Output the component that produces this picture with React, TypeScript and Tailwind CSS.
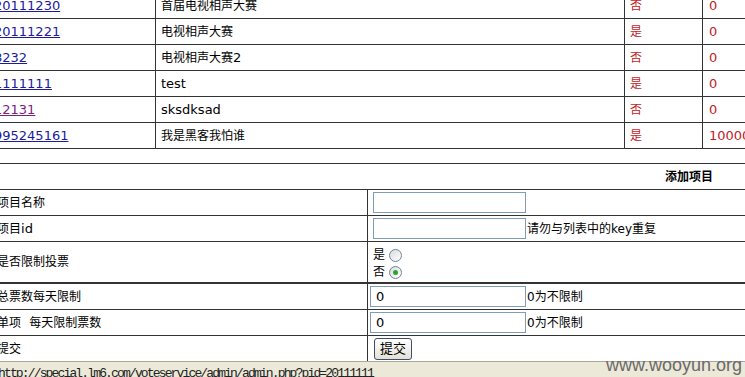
import React from "react";

type Row = { id: string; name: string; limit: string; total: string; visited?: boolean };

const rows: Row[] = [
  { id: "20111230", name: "首届电视相声大赛", limit: "否", total: "0" },
  { id: "20111221", name: "电视相声大赛", limit: "是", total: "0" },
  { id: "8232", name: "电视相声大赛2", limit: "否", total: "0" },
  { id: "1111111", name: "test", limit: "是", total: "0" },
  { id: "12131", name: "sksdksad", limit: "否", total: "0", visited: true },
  { id: "995245161", name: "我是黑客我怕谁", limit: "是", total: "10000" },
];

// CJK runs come out a little narrower than the latin text in the original
const Mixed = ({ text }: { text: string }) => {
  const parts = text.split(/([\u3000-\u303f\u4e00-\u9fff\uff00-\uffef]+)/);
  return (
    <>
      {parts.map((p, i) =>
        /[\u3000-\u303f\u4e00-\u9fff\uff00-\uffef]/.test(p) ? (
          <span key={i} className="text-[12px]">
            {p}
          </span>
        ) : (
          <span key={i}>{p}</span>
        )
      )}
    </>
  );
};

const TextBox = ({ value = "", wide = false }: { value?: string; wide?: boolean }) => (
  <div
    className={`h-[21px] shrink-0 border border-[#7f9db9] bg-white flex items-center text-[13px] text-black ${
      wide ? "w-[156px] pl-[5px]" : "w-[153px] pl-[3px]"
    }`}
  >
    {value}
  </div>
);

const Radio = ({ checked = false }: { checked?: boolean }) => (
  <div className="w-[13px] h-[13px] rounded-full border border-[#6f8398] bg-gradient-to-br from-[#d8dce0] to-white flex items-center justify-center">
    {checked && <div className="w-[5px] h-[5px] rounded-full bg-[#2aa52a]" />}
  </div>
);

const FormRow = ({
  label,
  children,
  className = "h-[26px] border-b",
}: {
  label: string;
  children: React.ReactNode;
  className?: string;
}) => (
  <div className={`flex border-[#333] border-solid ${className}`}>
    <div className="w-[374px] shrink-0 border-r border-solid border-[#333] pl-[3px] flex items-center whitespace-nowrap">
      <Mixed text={label} />
    </div>
    <div className="flex-1 flex items-center whitespace-nowrap">{children}</div>
  </div>
);

export default function App() {
  return (
    <div
      className="w-[745px] h-[377px] overflow-hidden relative bg-white flex flex-col text-[13px] text-black"
      style={{ fontFamily: '"DejaVu Sans", "Noto Sans CJK SC", sans-serif' }}
    >
      <div className="flex-1 overflow-hidden">
        <div className="ml-[-6px] mt-[-7px] w-[820px]">
          {rows.map((r) => (
            <div key={r.id} className="flex h-[26px] border-b border-solid border-[#333]">
              <div className="w-[162px] shrink-0 border-r border-solid border-[#333] flex items-center">
                <a
                  href="#"
                  className={`underline ${r.visited ? "text-[#7a1f7a]" : "text-[#1b1b9e]"}`}
                >
                  {r.id}
                </a>
              </div>
              <div className="w-[469px] shrink-0 border-r border-solid border-[#333] pl-[5px] flex items-center whitespace-nowrap">
                <Mixed text={r.name} />
              </div>
              <div className="w-[78px] shrink-0 border-r border-solid border-[#333] pl-[5px] flex items-center text-[#c0221f]">
                <Mixed text={r.limit} />
              </div>
              <div className="w-[100px] shrink-0 pl-[6px] flex items-center text-[#c0221f] whitespace-nowrap">
                {r.total}
              </div>
            </div>
          ))}

          <div className="mt-[14px] border-t border-solid border-[#333] w-[751px]">
            <div className="h-[26px] border-b border-solid border-[#333] flex items-center justify-end pr-[32px]">
              <span className="text-[12px] font-bold">添加项目</span>
            </div>
            <FormRow label="项目名称">
              <div className="pl-[5px]">
                <TextBox />
              </div>
            </FormRow>
            <FormRow label="项目id">
              <div className="pl-[5px] flex items-center">
                <TextBox />
                <span className="pl-[1px] text-[12px]">
                  <Mixed text="请勿与列表中的key重复" />
                </span>
              </div>
            </FormRow>
            <FormRow label="是否限制投票" className="h-[42px] border-b-2">
              <div className="pl-[5px] flex flex-col gap-[3px] self-start pt-[6px]">
                <div className="flex items-center gap-[4px] h-[14px]">
                  <span className="text-[12px]">是</span>
                  <Radio />
                </div>
                <div className="flex items-center gap-[4px] h-[14px]">
                  <span className="text-[12px]">否</span>
                  <Radio checked />
                </div>
              </div>
            </FormRow>
            <FormRow label="总票数每天限制">
              <div className="pl-[2px] flex items-center">
                <TextBox value="0" wide />
                <span className="pl-[1px] text-[12px]">
                  <Mixed text="0为不限制" />
                </span>
              </div>
            </FormRow>
            <FormRow label={"单项\u00a0\u00a0每天限制票数"}>
              <div className="pl-[2px] flex items-center">
                <TextBox value="0" wide />
                <span className="pl-[1px] text-[12px]">
                  <Mixed text="0为不限制" />
                </span>
              </div>
            </FormRow>
            <FormRow label="提交">
              <div className="pl-[6px]">
                <button className="w-[38px] h-[22px] rounded-[3px] border border-[#3c4f6e] bg-gradient-to-b from-white to-[#e3e1d6] text-[13px] leading-none text-black">
                  提交
                </button>
              </div>
            </FormRow>
          </div>
        </div>
      </div>

      <div className="h-[16px] shrink-0 bg-[#ece9d8] border-t border-[#aca899] overflow-hidden pt-[5px]">
        <div
          className="text-[13px] leading-[13px] tracking-[-1.85px] text-[#222] whitespace-nowrap ml-[-2px]"
          style={{ fontFamily: '"Liberation Mono", monospace' }}
        >
          http://special.lm6.com/voteservice/admin/admin.php?pid=20111111
        </div>
      </div>

      <div
        className="absolute right-[3px] bottom-[2px] text-[18px] leading-[20px] text-[#6a6a6a]"
        style={{ fontFamily: '"Liberation Sans", Arial, sans-serif' }}
      >
        www.wooyun.org
      </div>
    </div>
  );
}
